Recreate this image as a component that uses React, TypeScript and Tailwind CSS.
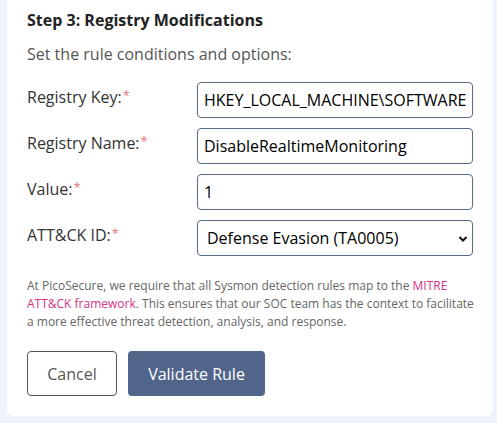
import React from "react";

const Req = () => <sup className="text-[#e8707a] text-[13px] relative top-[-3px] ml-[1px]">*</sup>;

function Row({ label, children }: { label: string; children: React.ReactNode }) {
  return (
    <div className="flex items-start">
      <label className="w-[170px] shrink-0 pt-[3px] text-[16px] text-[#333]">
        {label}
        <Req />
      </label>
      {children}
    </div>
  );
}

export default function App() {
  return (
    <div className="min-h-[423px] bg-[#eef2fa] pl-[7px] pr-[4px] pb-[8px]" style={{ fontFamily: '"Open Sans", sans-serif' }}>
      <div className="bg-white rounded-b-[6px] px-[20px] pt-[8px] pb-[20px]">
        <h3 className="text-[16px] font-bold text-[#222] leading-[24px]">Step 3: Registry Modifications</h3>
        <p className="mt-[10px] text-[16px] text-[#555] leading-[24px]">Set the rule conditions and options:</p>
        <div className="mt-[16px] flex flex-col gap-[10px]">
          <Row label="Registry Key:">
            <input
              readOnly
              value="HKEY_LOCAL_MACHINE\SOFTWARE\Policies\Microsoft\Windows Defender\Real-Time Protection"
              className="flex-1 min-w-0 h-[36px] border border-[#5b6b8a] rounded-[4px] px-[6px] text-[16px] text-black outline-none"
            />
          </Row>
          <Row label="Registry Name:">
            <input
              readOnly
              value="DisableRealtimeMonitoring"
              className="flex-1 min-w-0 h-[36px] border border-[#5b6b8a] rounded-[4px] px-[6px] text-[16px] text-black outline-none"
            />
          </Row>
          <Row label="Value:">
            <input
              readOnly
              value="1"
              className="flex-1 min-w-0 h-[36px] border border-[#5b6b8a] rounded-[4px] px-[6px] text-[16px] text-black outline-none"
            />
          </Row>
          <Row label="ATT&CK ID:">
            <div className="relative flex-1 h-[36px] border border-[#5b6b8a] rounded-[4px] flex items-center pl-[9px] text-[16px] text-black">
              <span>Defense Evasion (TA0005)</span>
              <svg className="absolute right-[4px] top-[14px]" width="10" height="8" viewBox="0 0 10 8">
                <path d="M1.5 2 L5 5.5 L8.5 2" fill="none" stroke="#111" strokeWidth="2" />
              </svg>
            </div>
          </Row>
        </div>
        <p className="mt-[21px] mr-[-10px] text-[12px] leading-[18px] text-[#666]">
          At PicoSecure, we require that all Sysmon detection rules map to the{" "}
          <span className="text-[#d63384]">MITRE ATT&amp;CK framework</span>. This ensures that our SOC team has the context to facilitate a more effective threat detection, analysis, and response.
        </p>
        <div className="mt-[20px] flex gap-[11px]">
          <button className="w-[90px] h-[45px] border border-[#555] rounded-[4px] text-[16px] text-[#555] bg-white">Cancel</button>
          <button className="w-[137px] h-[45px] rounded-[4px] text-[16px] text-white bg-[#51658a]">Validate Rule</button>
        </div>
      </div>
    </div>
  );
}
